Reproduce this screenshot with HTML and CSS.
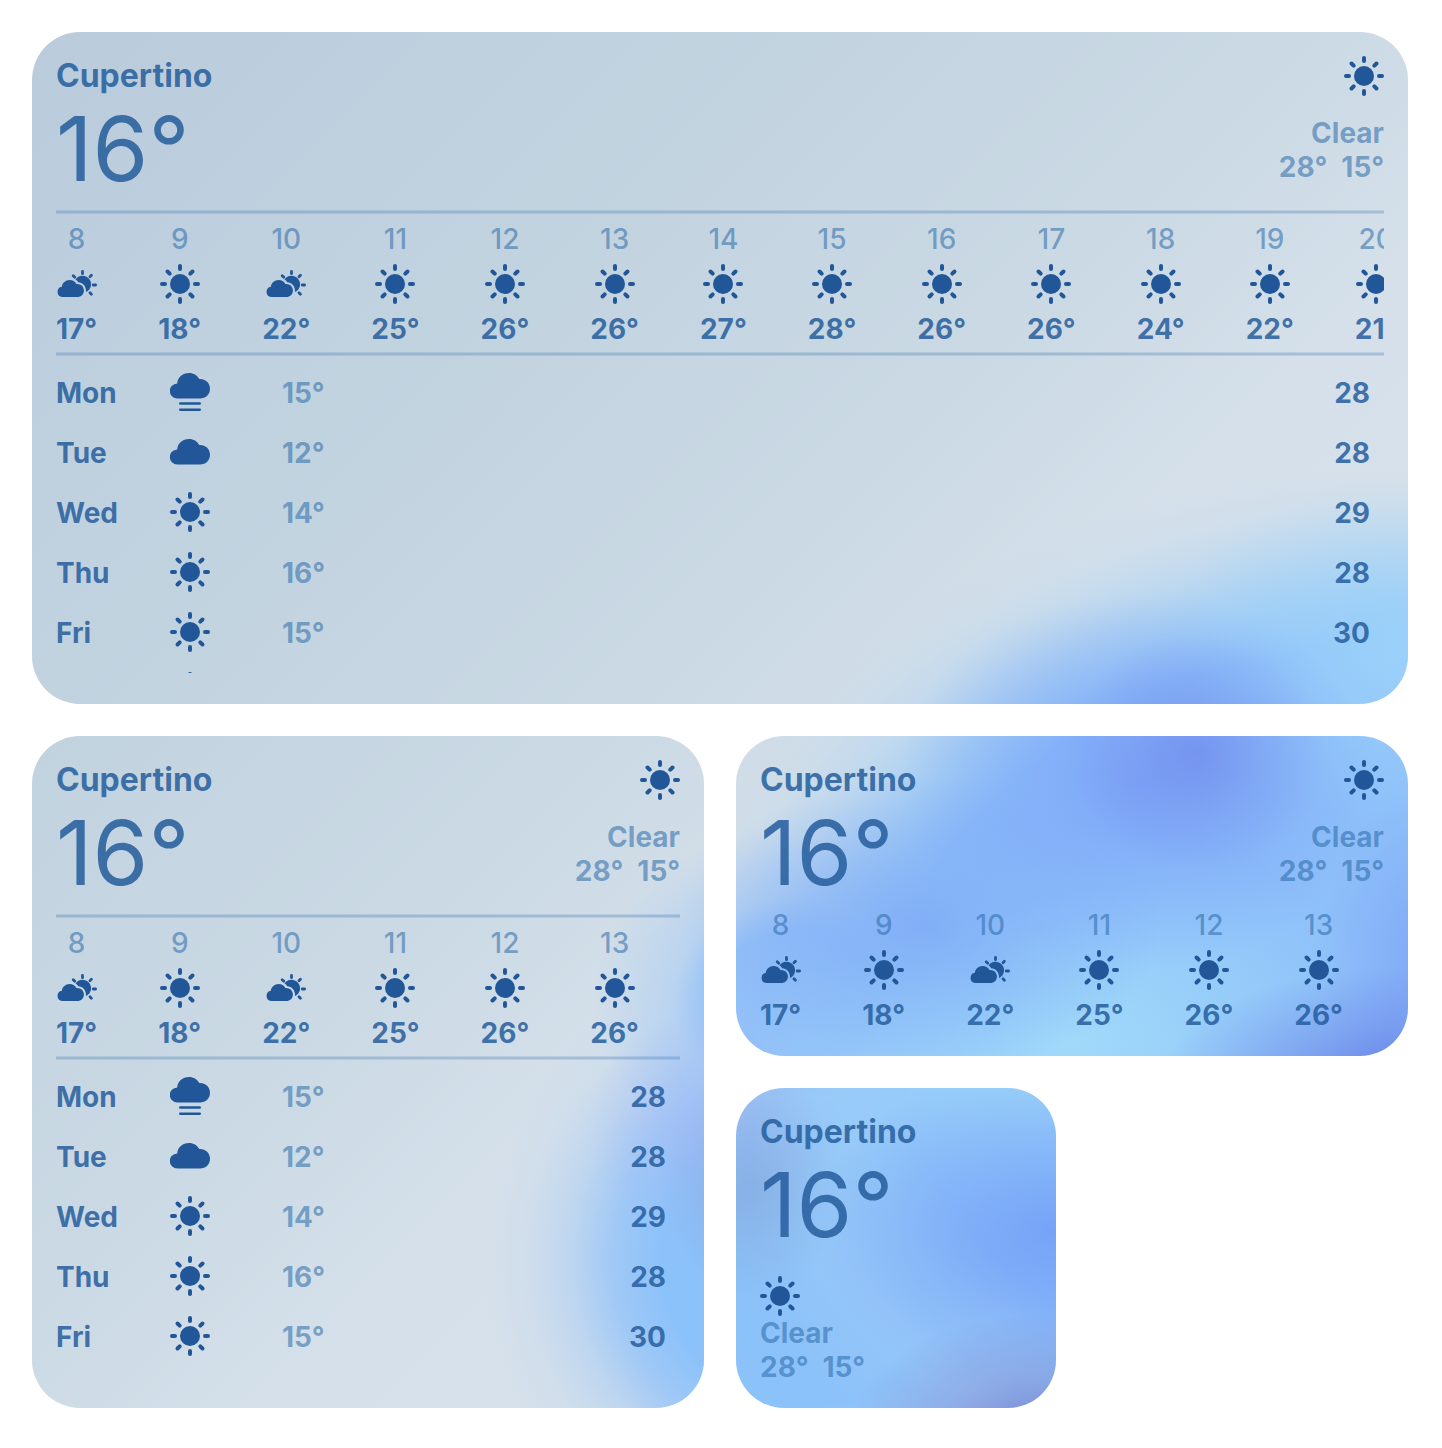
FILE: index.html
```html
<!DOCTYPE html>
<html lang="en">
<head>
<meta charset="utf-8">
<title>Cupertino weather</title>
<meta name="viewport" content="width=device-width, initial-scale=1">
<link rel="stylesheet" href="styles.css">
</head>
<body>
<svg class="sprite" aria-hidden="true">
  <symbol id="sun" viewBox="0 0 40 40">
    <circle cx="20" cy="20" r="10"/>
    <path d="M20 2v3M20 35v3M2 20h3M35 20h3M7.500 7.500l2.200 2.200M30.300 30.300l2.200 2.200M7.500 32.500l2.200-2.200M30.300 9.700l2.200-2.200" fill="none" stroke="currentColor" stroke-width="4" stroke-linecap="round"/>
  </symbol>
  <symbol id="cloud" viewBox="0 0 40 40">
    <path d="M7.600 32.600a7.600 7.600 0 0 1-.400-15.200C7.600 11.500 12.500 7 19 7c4.500 0 8.300 2.300 10.200 6C35.500 12.600 40 17 40 22.800c0 5.700-4.200 9.800-10 9.800Z"/>
  </symbol>
  <symbol id="rain" viewBox="0 0 40 40">
    <path d="M7.600 26.600a7.600 7.600 0 0 1-.400-15.200C7.600 5.500 12.500 1 19 1c4.500 0 8.300 2.300 10.200 6C35.500 6.600 40 11 40 16.800c0 5.700-4.200 9.800-10 9.800Z"/>
    <path d="M10.200 31.500h19.600M10.200 37.800h19.600" fill="none" stroke="currentColor" stroke-width="2.400" stroke-linecap="round"/>
  </symbol>
  <symbol id="partly" viewBox="0 0 40 40">
    <path d="M5.200 33a5.200 5.200 0 0 1-.300-10.300C5.200 19 8.500 16 12.600 16c3 0 5.500 1.500 6.800 4 4.300-.3 7.500 2.600 7.500 6.400 0 3.900-2.800 6.600-6.700 6.600Z"/>
    <path d="M18.500 15.500a8.500 8.500 0 1 1 10.500 12.500c.5-6-3.500-9.800-7.800-9.800-.8-1.200-1.700-2.100-2.700-2.700Z"/>
    <path d="M25.500 7.500v2.200M36.200 21h2.400M16.200 11.700l1.600 1.600M33 12.700l1.400-1.400M33 28.800l1.400 1.400" fill="none" stroke="currentColor" stroke-width="2.800" stroke-linecap="round"/>
  </symbol>
</svg>
<main class="board">
  <article class="card card-xl" data-hours="13" data-days="6"></article>
  <article class="card card-lg" data-hours="6" data-days="5"></article>
  <article class="card card-md" data-hours="6" data-days="0"></article>
  <article class="card card-sm" data-hours="0" data-days="0"></article>
</main>
<script src="app.js"></script>
</body>
</html>
```

FILE: styles.css
```css
* { box-sizing: border-box; }

:root {
  --strong: rgba(37, 93, 156, .86);
  --soft: rgba(39, 104, 166, .55);
  --icon: #215798;
  --line: rgba(39, 104, 166, .28);
  --line-edge: rgba(39, 104, 166, .14);
  --rule: linear-gradient(var(--line-edge) 1px, var(--line) 1px 3px, var(--line-edge) 3px);
}

body {
  margin: 0;
  background: #fff;
  color: var(--strong);
  font: 700 28px/34px Inter, "Liberation Sans", sans-serif;
}

ul { margin: 0; padding: 0; list-style: none; }
.sprite { display: none; }

.board {
  display: grid;
  grid-template-columns: repeat(4, minmax(0, 1fr));
  grid-auto-rows: minmax(320px, auto);
  gap: 32px;
  padding: 32px 34px 32px 32px;
}

.card {
  display: flex;
  flex-direction: column;
  min-width: 0;
  padding: 24px;
  border-radius: 48px;
  overflow: hidden;
  background:
    radial-gradient(130px 120px at 83% 52%, rgba(112, 138, 234, .7), rgba(112, 138, 234, .28) 50%, rgba(112, 138, 234, 0)),
    radial-gradient(240px 120px at 97% 75%, rgba(98, 120, 228, .9), rgba(98, 120, 228, .4) 50%, rgba(98, 120, 228, 0)),
    radial-gradient(190px 120px at 72% 99%, rgba(105, 125, 212, .95), rgba(105, 125, 212, .4) 50%, rgba(105, 125, 212, 0)),
    radial-gradient(90px 120px at 52% 82%, rgba(130, 170, 222, .7), rgba(130, 170, 222, .35) 50%, rgba(130, 170, 222, 0)),
    radial-gradient(240px 170px at 73% 85%, rgba(112, 155, 247, .8), rgba(112, 155, 247, .4) 50%, rgba(112, 155, 247, 0)),
    radial-gradient(240px 190px at 79% 54%, rgba(120, 158, 248, .75), rgba(120, 160, 248, .4) 50%, rgba(124, 165, 248, 0)),
    radial-gradient(240px 150px at 64% 64%, rgba(124, 168, 246, .8), rgba(124, 168, 246, .4) 50%, rgba(124, 168, 246, 0)),
    radial-gradient(110px 170px at 99% 66%, rgba(124, 160, 246, .75), rgba(124, 160, 246, .35) 50%, rgba(124, 160, 246, 0)),
    radial-gradient(320px 220px at 74% 72%, rgba(160, 218, 250, 1), rgba(160, 218, 250, .5) 50%, rgba(160, 218, 250, 0)),
    radial-gradient(240px 170px at 97% 45%, rgba(156, 211, 250, .9), rgba(156, 211, 250, .4) 50%, rgba(156, 211, 250, 0)),
    radial-gradient(120px 120px at 49% 78%, rgba(165, 185, 245, .65), rgba(165, 185, 245, .3) 50%, rgba(165, 185, 245, 0)),
    radial-gradient(200px 170px at 55% 69%, rgba(142, 190, 249, .9) 40%, rgba(150, 195, 248, .4) 60%, rgba(160, 200, 247, 0)),
    radial-gradient(740px 560px at 97% 71%, rgba(142, 192, 249, 1) 68%, rgba(150, 200, 247, .8) 76%, rgba(165, 208, 245, .4) 86%, rgba(175, 212, 244, .12) 93%, rgba(175, 212, 244, 0)),
    radial-gradient(320px 320px at 56% 87%, rgba(140, 194, 250, 1) 46%, rgba(145, 194, 249, .8) 60%, rgba(160, 200, 247, .4) 75%, rgba(170, 206, 246, .12) 88%, rgba(170, 206, 246, 0)),
    linear-gradient(135deg, #b9cbdc, #c2d3e0 28%, #cad9e4 46%, #d5e0ea 58%, #d6e1eb);
  background-attachment: fixed;
}

.card-xl { grid-column: span 4; grid-row: span 2; }
.card-lg { grid-column: span 2; grid-row: span 2; }
.card-md { grid-column: span 2; }

.icon {
  display: block;
  width: 40px;
  height: 40px;
  color: var(--icon);
  fill: currentColor;
}

.top { display: flex; justify-content: space-between; height: 148px; }
.city { margin: 0; font-size: 32px; line-height: 39px; font-weight: 700; }
.now { margin: 0; font-size: 90px; line-height: 108px; font-weight: 400; }

.state { display: flex; flex-direction: column; align-items: flex-end; }
.state .icon { margin-bottom: 20px; }
.state p { margin: 0; color: var(--soft); }
.range { display: flex; gap: 14px; }

.card-sm { justify-content: space-between; }
.card-sm .top { display: block; }
.card-sm .state { align-items: flex-start; }
.card-sm .state .icon { margin-bottom: 0; }

.hours { display: flex; gap: 61px; overflow: hidden; }
.hours li { display: flex; flex: none; flex-direction: column; align-items: center; gap: 8px; }
.hour { color: var(--soft); font-weight: 500; }

.card-xl .hours, .card-lg .hours {
  margin: 6px 0;
  padding: 12px 0 10px;
  background: var(--rule) top / 100% 4px no-repeat, var(--rule) bottom / 100% 4px no-repeat;
}

.days { display: grid; gap: 20px; margin-top: 10px; overflow: hidden; }
.card-xl .days { max-height: 301px; }
.days li {
  display: grid;
  grid-template-columns: 114px 112px 1fr auto;
  align-items: center;
  height: 40px;
  padding-right: 14px;
}
.days span { padding-top: 2px; }
.low { color: var(--soft); }
```

FILE: app.js
```js
const hours = [
  [8, "partly", 17], [9, "sun", 18], [10, "partly", 22], [11, "sun", 25],
  [12, "sun", 26], [13, "sun", 26], [14, "sun", 27], [15, "sun", 28],
  [16, "sun", 26], [17, "sun", 26], [18, "sun", 24], [19, "sun", 22], [20, "sun", 21]
];
const days = [
  ["Mon", "rain", 15, 28], ["Tue", "cloud", 12, 28], ["Wed", "sun", 14, 29],
  ["Thu", "sun", 16, 28], ["Fri", "sun", 15, 30], ["", "sun", "", ""]
];
const icon = name => `<svg class="icon" aria-hidden="true"><use href="#${name}"/></svg>`;

document.querySelectorAll(".card").forEach(card => {
  const hourCount = Number(card.dataset.hours);
  const dayCount = Number(card.dataset.days);
  const state = `<div class="state">${icon("sun")}<p>Clear</p><p class="range"><span>28°</span><span>15°</span></p></div>`;
  const title = `<div><h2 class="city">Cupertino</h2><p class="now">16°</p></div>`;
  const compact = card.classList.contains("card-sm");
  let html = compact ? `<div class="top">${title}</div>${state}` : `<div class="top">${title}${state}</div>`;
  if (hourCount) {
    html += `<ul class="hours">${hours.slice(0, hourCount).map(([h, i, t]) =>
      `<li><span class="hour">${h}</span>${icon(i)}<span>${t}°</span></li>`).join("")}</ul>`;
  }
  if (dayCount) {
    html += `<ul class="days">${days.slice(0, dayCount).map(([d, i, lo, hi]) =>
      `<li><span>${d}</span>${icon(i)}<span class="low">${lo === "" ? "" : lo + "°"}</span><span>${hi}</span></li>`).join("")}</ul>`;
  }
  card.innerHTML = html;
});
```
